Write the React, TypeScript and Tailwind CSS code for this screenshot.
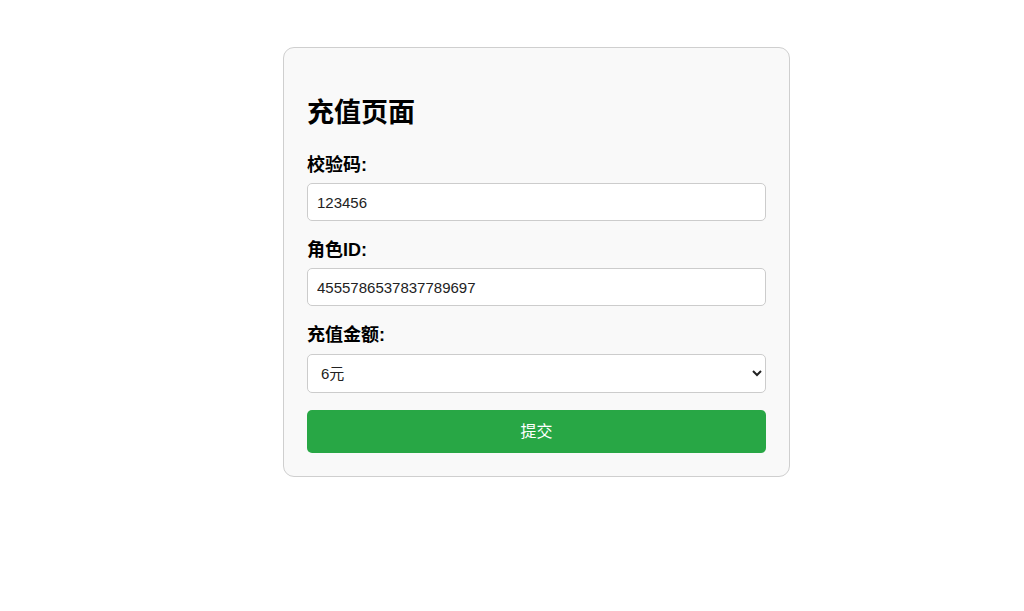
import { useState } from "react";

const font = { fontFamily: '"Liberation Sans", "Noto Sans CJK SC", Arial, sans-serif' };

export default function App() {
  const [code, setCode] = useState("123456");
  const [roleId, setRoleId] = useState("4555786537837789697");
  const [amount, setAmount] = useState("6");

  return (
    <div className="min-h-[611px] bg-white pt-[47px]" style={font}>
      <div className="ml-[283px] w-[507px] rounded-[11px] border border-[#cfcfcf] bg-[#f9f9f9] p-[23px]">
        <h2 className="mb-[24px] mt-[26px] text-[27px] font-bold leading-[32px] text-black">充值页面</h2>

        <form onSubmit={(e) => e.preventDefault()}>
          <label className="mb-[6px] block text-[18px] font-bold leading-[24px] text-black">校验码:</label>
          <input
            value={code}
            onChange={(e) => setCode(e.target.value)}
            className="mb-[17px] block h-[38px] w-full rounded-[5px] border border-[#cccccc] bg-white px-[9px] text-[15px] text-[#222] outline-none"
          />

          <label className="mb-[6px] block text-[18px] font-bold leading-[24px] text-black">角色ID:</label>
          <input
            value={roleId}
            onChange={(e) => setRoleId(e.target.value)}
            className="mb-[17px] block h-[38px] w-full rounded-[5px] border border-[#cccccc] bg-white px-[9px] text-[15px] text-[#222] outline-none"
          />

          <label className="mb-[7px] block text-[18px] font-bold leading-[24px] text-black">充值金额:</label>
          <select
            value={amount}
            onChange={(e) => setAmount(e.target.value)}
            className="mb-[17px] block h-[39px] w-full rounded-[5px] border border-[#cccccc] bg-white px-[9px] text-[15px] text-[#222] outline-none"
          >
            <option value="6">6元</option>
            <option value="30">30元</option>
            <option value="68">68元</option>
            <option value="128">128元</option>
            <option value="328">328元</option>
            <option value="648">648元</option>
          </select>

          <button
            type="submit"
            className="block h-[43px] w-full rounded-[5px] bg-[#28a745] text-[16px] text-white"
          >
            提交
          </button>
        </form>
      </div>
    </div>
  );
}
